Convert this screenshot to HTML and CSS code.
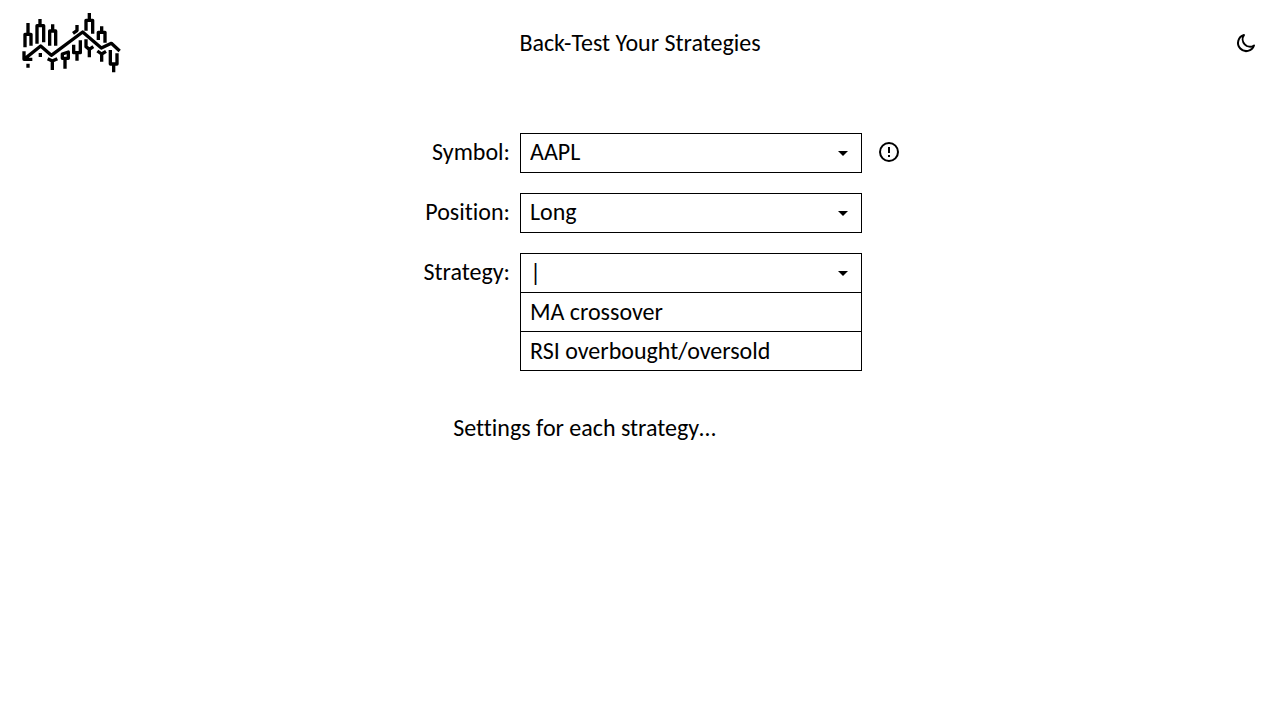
FILE: index.html
```html
<!DOCTYPE html>
<html lang="en">
<head>
<meta charset="utf-8">
<meta name="viewport" content="width=device-width, initial-scale=1">
<title>Back-Test Your Strategies</title>
<link rel="stylesheet" href="styles.css">
</head>
<body>
<header class="header">
  <a class="logo" href="#" aria-label="Home">
    <svg width="104" height="62" viewBox="12 12 312 186" fill="none" stroke="currentColor" stroke-width="10" stroke-linejoin="round" aria-hidden="true">
      <path d="M24 154 74 114 106 142 200 72 256 120 286 106 311 129M24 130V154H49"/>
      <path d="M36 45V76M27 118V79H45V113"/>
      <path d="M72 33V50M63 107V53H83V103"/>
      <path d="M110 49V67M101 113V69H119V113"/>
      <path d="M36 167V179M73 135V147"/>
      <path d="M95 152 109 159 124 152M109 159V186"/>
      <path d="M139 138V151H157V132ZM147 151V182"/>
      <path d="M171 76 184 67M183 51V70"/>
      <path d="M173 110V134H193V97M183 134V158"/>
      <path d="M210 68V37H230V77M220 15V36"/>
      <path d="M210 94V116L220 124 232 116M220 124V148"/>
      <path d="M247 96V73H267V104M257 55V72"/>
      <path d="M244 129 257 138 270 130M257 138V161"/>
      <path d="M283 126V168H303V136M293 168V193"/>
    </svg>
  </a>
  <h1 class="title">Back-Test Your Strategies</h1>
  <button class="icon-button theme-toggle" type="button" aria-label="Switch to dark mode">
    <svg width="24" height="24" viewBox="0 0 24 24" fill="none" stroke="currentColor" stroke-width="2" stroke-linejoin="round" aria-hidden="true">
      <path d="M10 4A8.200 8.200 0 1 0 20 14.500A7.400 7.400 0 0 1 10 4Z"/>
    </svg>
  </button>
</header>
<main class="main">
  <form class="form">
    <label class="label" for="symbol">Symbol:</label>
    <div class="field">
      <select class="control" id="symbol"><option>AAPL</option></select>
      <svg class="arrow" width="10" height="5" viewBox="0 0 10 5" aria-hidden="true"><path d="M0 0H10L5 5Z"/></svg>
    </div>
    <button class="icon-button info" type="button" aria-label="Symbol information">
      <svg width="24" height="24" viewBox="0 0 24 24" aria-hidden="true">
        <circle cx="12" cy="12" r="9" fill="none" stroke="currentColor" stroke-width="2"/>
        <path d="M11 7H13V13H11ZM11 15H13V17H11Z"/>
      </svg>
    </button>

    <label class="label" for="position">Position:</label>
    <div class="field">
      <select class="control" id="position"><option>Long</option><option>Short</option></select>
      <svg class="arrow" width="10" height="5" viewBox="0 0 10 5" aria-hidden="true"><path d="M0 0H10L5 5Z"/></svg>
    </div>

    <label class="label" for="strategy">Strategy:</label>
    <div class="field">
      <input class="control" id="strategy" type="text" value="|" role="combobox" aria-expanded="true" aria-controls="strategies" autocomplete="off">
      <svg class="arrow" width="10" height="5" viewBox="0 0 10 5" aria-hidden="true"><path d="M0 0H10L5 5Z"/></svg>
      <div class="options" id="strategies" role="listbox">
        <button class="option" type="button" role="option">MA crossover</button>
        <button class="option" type="button" role="option">RSI overbought/oversold</button>
      </div>
    </div>
  </form>
  <p class="settings">Settings for each strategy…</p>
</main>
</body>
</html>
```
FILE: styles.css
```css
* {
  box-sizing: border-box;
}

body {
  margin: 0;
  background: #fff;
  color: #000;
  font: 24px/28px Carlito, Calibri, Lato, sans-serif;
  font-variant-ligatures: none;
}

.header {
  display: grid;
  grid-template-columns: 1fr auto 1fr;
  align-items: center;
  padding: 12px 20px;
}

.logo {
  display: flex;
  justify-self: start;
  color: inherit;
}

.title {
  margin: 0;
  font-size: inherit;
  font-weight: normal;
}

.icon-button {
  display: flex;
  padding: 0;
  border: 0;
  background: none;
  color: inherit;
  cursor: pointer;
}

.theme-toggle {
  justify-self: end;
  margin-right: 2px;
}

.main {
  padding-top: 47px;
}

.form {
  display: grid;
  grid-template-columns: 1fr 342px 1fr;
  gap: 20px 10px;
  align-items: center;
  padding-left: 102px;
}

.label {
  grid-column: 1;
  justify-self: end;
}

.field {
  position: relative;
  display: grid;
  align-items: center;
}

.control,
.arrow {
  grid-area: 1 / 1;
}

.control {
  width: 100%;
  height: 40px;
  padding: 0 9px 2px;
  border: 1px solid #000;
  border-radius: 0;
  background: #fff;
  color: inherit;
  font: inherit;
  font-variant-ligatures: none;
  appearance: none;
}

.arrow {
  justify-self: end;
  margin-right: 14px;
  pointer-events: none;
}

.label,
.info {
  padding-bottom: 2px;
}

.info {
  justify-self: start;
  margin-left: 5px;
}

.options {
  position: absolute;
  top: 100%;
  left: 0;
  right: 0;
}

.option {
  display: block;
  width: 100%;
  height: 39px;
  padding: 0 9px;
  border: 1px solid #000;
  border-top: 0;
  background: #fff;
  color: inherit;
  font: inherit;
  font-variant-ligatures: none;
  text-align: left;
}

.settings {
  margin: 121px 0 0;
  padding-right: 111px;
  text-align: center;
}
```
